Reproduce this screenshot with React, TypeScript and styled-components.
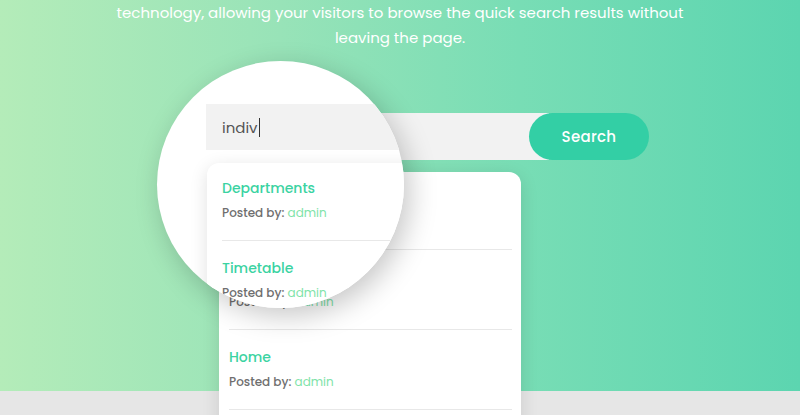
import styled, { createGlobalStyle } from "styled-components";

const GlobalStyle = createGlobalStyle`
  html, body {
    margin: 0;
    padding: 0;
    height: 100%;
  }
  body {
    font-family: "Poppins", "Open Sans", "Noto Sans", sans-serif;
    background: #e6e6e6;
    overflow: hidden;
  }
`;

const Page = styled.div`
  width: 800px;
  height: 415px;
  position: relative;
  overflow: hidden;
  background: #e6e6e6;
`;

const Hero = styled.section`
  height: 391px;
  background: linear-gradient(90deg, #b4ecb9 0%, #98e3b8 35%, #78ddb5 65%, #5cd5b0 100%);
  display: flex;
  flex-direction: column;
  align-items: center;
`;

const Intro = styled.p`
  margin: 0;
  width: 600px;
  text-align: center;
  color: #ffffff;
  font-size: 15px;
  font-weight: 400;
  line-height: 25px;
`;

const SearchArea = styled.div`
  position: relative;
  margin-top: 63px;
  margin-left: 68px;
  display: flex;
  align-items: center;
`;

const SearchInput = styled.div`
  width: 330px;
  height: 47px;
  background: #f2f2f2;
`;

const SearchButton = styled.button`
  width: 120px;
  height: 47px;
  margin-left: -20px;
  border: none;
  border-radius: 24px;
  background: #33cfa5;
  color: #ffffff;
  font-family: inherit;
  font-size: 15px;
  font-weight: 500;
  letter-spacing: 0.3px;
  cursor: pointer;
`;

const Dropdown = styled.div<{ $left: number; $top: number; $padLeft: number }>`
  position: absolute;
  left: ${(p) => p.$left}px;
  top: ${(p) => p.$top}px;
  width: 302px;
  box-sizing: border-box;
  padding: 0 9px 0 ${(p) => p.$padLeft}px;
  background: #ffffff;
  border-radius: 12px 12px 0 0;
  box-shadow: 0 4px 18px rgba(0, 0, 0, 0.12);
`;

const Item = styled.div`
  padding: 17px 0 17px;
  border-bottom: 1px solid #e8e8e8;
  &:first-child {
    padding-top: 15px;
  }
`;

const Title = styled.div`
  color: #3bd3a2;
  font-size: 14px;
  font-weight: 500;
  line-height: 20px;
`;

const Meta = styled.div`
  margin-top: 5px;
  color: #6f6f6f;
  font-size: 12px;
  font-weight: 500;
  line-height: 20px;
  & > span {
    color: #7fe3a9;
    font-weight: 400;
  }
`;

const Lens = styled.div`
  position: absolute;
  left: 157px;
  top: 61px;
  width: 247px;
  height: 247px;
  border-radius: 50%;
  overflow: hidden;
  background: #ffffff;
  box-shadow: 6px 8px 28px rgba(0, 0, 0, 0.22);
  z-index: 5;
`;

const LensInput = styled.div`
  position: absolute;
  left: 49px;
  top: 43px;
  width: 400px;
  height: 46px;
  box-sizing: border-box;
  padding-left: 16px;
  background: #f2f2f2;
  display: flex;
  align-items: center;
  color: #555555;
  font-size: 15px;
`;

const Caret = styled.span`
  display: inline-block;
  width: 1px;
  height: 19px;
  margin-left: 1px;
  background: #333333;
`;

const results = ["Departments", "Timetable", "Home", "About"];

const ResultList = ({ items }: { items: string[] }) => (
  <>
    {items.map((t) => (
      <Item key={t}>
        <Title>{t}</Title>
        <Meta>
          Posted by: <span>admin</span>
        </Meta>
      </Item>
    ))}
  </>
);

const App = () => {
  return (
    <Page>
      <GlobalStyle />
      <Hero>
        <Intro>
          technology, allowing your visitors to browse the quick search results without leaving the page.
        </Intro>
        <SearchArea>
          <SearchInput />
          <SearchButton>Search</SearchButton>
        </SearchArea>
      </Hero>
      <Dropdown $left={219} $top={172} $padLeft={10}>
        <ResultList items={results} />
      </Dropdown>
      <Lens>
        <LensInput>
          indiv
          <Caret />
        </LensInput>
        <Dropdown $left={50} $top={102} $padLeft={15}>
          <ResultList items={results.slice(0, 2)} />
        </Dropdown>
      </Lens>
    </Page>
  );
};

export default App;
